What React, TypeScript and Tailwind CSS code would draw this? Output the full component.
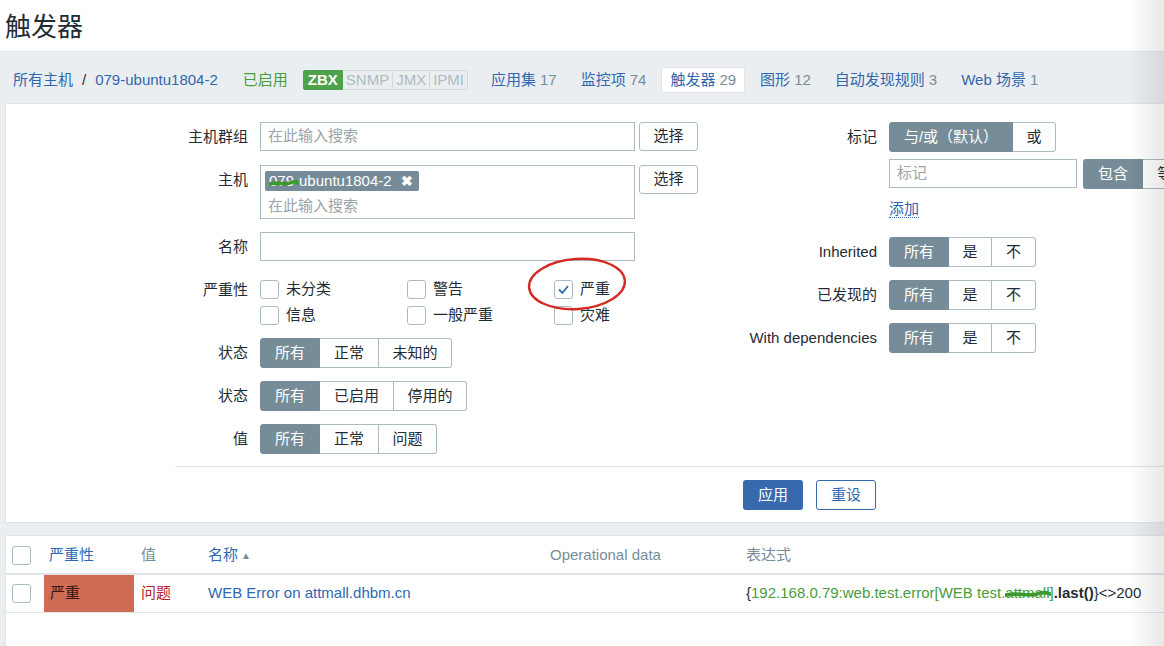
import React from "react";

const LINK = "text-[#2f68ae]";

interface SegItem {
  label: string;
  w: string;
}

function Seg({ items }: { items: SegItem[] }) {
  return (
    <div className="flex h-[30px]">
      {items.map((it, i) => (
        <div
          key={it.label}
          className={`${it.w} flex items-center justify-center ${
            i === 0
              ? "bg-[#768d99] text-white rounded-l-[3px] border border-[#768d99]"
              : "bg-white text-[#1f2c33] border-y border-r border-[#acbbc2]"
          } ${i === items.length - 1 ? "rounded-r-[3px]" : ""}`}
        >
          {it.label}
        </div>
      ))}
    </div>
  );
}

function Checkbox({ checked = false }: { checked?: boolean }) {
  return (
    <span className="w-[19px] h-[19px] border border-[#acbbc2] rounded-[3px] bg-white flex items-center justify-center shrink-0">
      {checked && (
        <svg width="13" height="13" viewBox="0 0 13 13">
          <polyline points="2,6.5 5.5,10 11,3" fill="none" stroke="#2f68ae" strokeWidth="1.8" />
        </svg>
      )}
    </span>
  );
}

function Scribble({ w }: { w: number }) {
  return (
    <svg className="absolute left-0 top-[4px] pointer-events-none" width={w} height="12" viewBox={`0 0 ${w} 12`}>
      <path
        d={`M1 7 C ${w * 0.3} 4, ${w * 0.5} 9, ${w * 0.7} 6 S ${w - 4} 5, ${w - 1} 6`}
        fill="none"
        stroke="#3c9a2c"
        strokeWidth="3.6"
        strokeLinecap="round"
      />
    </svg>
  );
}

function Row({ label, children, labelW }: { label: string; children: React.ReactNode; labelW: string }) {
  return (
    <div className="flex">
      <div className={`${labelW} shrink-0 text-right pr-[12px] h-[30px] flex items-center justify-end`}>{label}</div>
      {children}
    </div>
  );
}

export default function App() {
  const tabs = [
    { name: "应用集", n: "17", active: false },
    { name: "监控项", n: "74", active: false },
    { name: "触发器", n: "29", active: true },
    { name: "图形", n: "12", active: false },
    { name: "自动发现规则", n: "3", active: false },
    { name: "Web 场景", n: "1", active: false },
  ];

  return (
    <div className="relative w-[1164px] h-[646px] overflow-hidden bg-[#ebeef0] text-[15px] text-[#1f2c33] font-['Liberation_Sans','Noto_Sans_CJK_SC',sans-serif]">
      {/* header */}
      <div className="h-[52px] bg-white border-b border-[#dfe4e7] flex items-center px-[5px]">
        <h1 className="text-[26px] leading-none pt-[2px]">触发器</h1>
      </div>

      {/* breadcrumbs + tabs */}
      <div className="h-[51px] pt-[5px] flex items-center pl-[13px]">
        <span className={LINK}>所有主机</span>
        <span className="mx-[9px]">/</span>
        <span className={LINK}>079-ubuntu1804-2</span>
        <span className="ml-[25px] text-[#4a9c3d]">已启用</span>
        <div className="ml-[15px] flex h-[20px] text-[15px] leading-[18px]">
          <span className="px-[4px] bg-[#4ea24c] text-white border border-[#4ea24c] rounded-l-[2px] font-bold">ZBX</span>
          <span className="px-[3px] bg-[#ebeef0] text-[#acbbc2] border-y border-r border-[#d2d9dd]">SNMP</span>
          <span className="px-[3px] bg-[#ebeef0] text-[#acbbc2] border-y border-r border-[#d2d9dd]">JMX</span>
          <span className="px-[3px] bg-[#ebeef0] text-[#acbbc2] border-y border-r border-[#d2d9dd] rounded-r-[2px]">IPMI</span>
        </div>
        <div className="ml-[14px] flex gap-[6px]">
          {tabs.map((t) => (
            <div
              key={t.name}
              className={`h-[26px] px-[8px] flex items-center border rounded-[2px] ${
                t.active ? "bg-white border-[#dfe4e7]" : "border-transparent"
              }`}
            >
              <span className={LINK}>{t.name}</span>
              <span className="ml-[4px] text-[#768d99]">{t.n}</span>
            </div>
          ))}
        </div>
      </div>

      {/* filter */}
      <div className="ml-[5px] w-[1240px] bg-white border border-[#dfe4e7] pt-[18px]">
        <div className="flex">
          {/* left column */}
          <div className="w-[705px] shrink-0 flex flex-col gap-[13px]">
            <Row label="主机群组" labelW="w-[254px]">
              <div className="flex gap-[4px]">
                <div className="w-[375px] h-[29px] border border-[#acbbc2] flex items-center px-[7px] text-[#9aa4a9]">
                  在此输入搜索
                </div>
                <div className="w-[59px] h-[29px] border border-[#acbbc2] rounded-[3px] flex items-center justify-center">选择</div>
              </div>
            </Row>
            <div className="flex">
              <div className="w-[254px] shrink-0 text-right pr-[12px] h-[30px] flex items-center justify-end">主机</div>
              <div className="flex gap-[4px]">
                <div className="w-[375px] h-[54px] border border-[#acbbc2] px-[4px] pt-[4px]">
                  <span className="inline-flex items-center h-[20px] px-[4px] bg-[#768d99] text-white rounded-[2px] leading-none">
                    <span className="relative">
                      079
                      <Scribble w={30} />
                    </span>
                    -ubuntu1804-2
                    <span className="ml-[9px] mr-[2px] text-[14px] font-bold">✖</span>
                  </span>
                  <div className="px-[3px] pt-[3px] text-[#9aa4a9] leading-[20px]">在此输入搜索</div>
                </div>
                <div className="w-[59px] h-[29px] border border-[#acbbc2] rounded-[3px] flex items-center justify-center">选择</div>
              </div>
            </div>
            <Row label="名称" labelW="w-[254px]">
              <div className="w-[375px] h-[29px] border border-[#acbbc2]" />
            </Row>
            <div className="flex h-[50px]">
              <div className="w-[254px] shrink-0 text-right pr-[12px] pt-[4px] leading-[22px]">严重性</div>
              <div className="pt-[5px] grid grid-cols-[147px_147px_147px] gap-y-[6px]">
                {[
                  ["未分类", false],
                  ["警告", false],
                  ["严重", true],
                  ["信息", false],
                  ["一般严重", false],
                  ["灾难", false],
                ].map(([l, c]) => (
                  <div key={l as string} className="flex items-center gap-[7px] h-[19px]">
                    <Checkbox checked={c as boolean} />
                    <span>{l as string}</span>
                  </div>
                ))}
              </div>
            </div>
            <Row label="状态" labelW="w-[254px]">
              <Seg
                items={[
                  { label: "所有", w: "w-[60px]" },
                  { label: "正常", w: "w-[59px]" },
                  { label: "未知的", w: "w-[73px]" },
                ]}
              />
            </Row>
            <Row label="状态" labelW="w-[254px]">
              <Seg
                items={[
                  { label: "所有", w: "w-[60px]" },
                  { label: "已启用", w: "w-[74px]" },
                  { label: "停用的", w: "w-[73px]" },
                ]}
              />
            </Row>
            <Row label="值" labelW="w-[254px]">
              <Seg
                items={[
                  { label: "所有", w: "w-[60px]" },
                  { label: "正常", w: "w-[59px]" },
                  { label: "问题", w: "w-[58px]" },
                ]}
              />
            </Row>
          </div>

          {/* right column */}
          <div className="flex flex-col">
            <Row label="标记" labelW="w-[178px]">
              <div className="flex flex-col">
                <Seg
                  items={[
                    { label: "与/或（默认）", w: "w-[124px]" },
                    { label: "或", w: "w-[43px]" },
                  ]}
                />
                <div className="mt-[7px] flex gap-[6px]">
                  <div className="w-[188px] h-[29px] border border-[#acbbc2] flex items-center px-[7px] text-[#9aa4a9]">标记</div>
                  <div className="flex h-[30px]">
                    <div className="w-[60px] bg-[#768d99] text-white rounded-l-[3px] flex items-center justify-center">包含</div>
                    <div className="w-[60px] border-y border-r border-[#acbbc2] flex items-center justify-center">等于</div>
                  </div>
                </div>
                <div className="mt-[9px] h-[20px]">
                  <span className={`${LINK} border-b border-dotted border-[#2f68ae]`}>添加</span>
                </div>
              </div>
            </Row>
            <div className="mt-[19px] flex flex-col gap-[13px]">
              {["Inherited", "已发现的", "With dependencies"].map((l) => (
                <Row key={l} label={l} labelW="w-[178px]">
                  <Seg
                    items={[
                      { label: "所有", w: "w-[60px]" },
                      { label: "是", w: "w-[43px]" },
                      { label: "不", w: "w-[44px]" },
                    ]}
                  />
                </Row>
              ))}
            </div>
          </div>
        </div>

        {/* actions */}
        <div className="mt-[12px] ml-[169px] border-t border-[#dfe4e7] pt-[13px] pb-[12px] pl-[568px] flex gap-[13px]">
          <div className="w-[60px] h-[30px] bg-[#3669ad] text-white rounded-[3px] flex items-center justify-center">应用</div>
          <div className="w-[60px] h-[30px] border border-[#3669ad] text-[#3669ad] rounded-[3px] flex items-center justify-center">重设</div>
        </div>
      </div>

      {/* table */}
      <div className="ml-[5px] mt-[12px] w-[1240px] h-[200px] bg-white border border-[#dfe4e7]">
        <div className="flex h-[39px] pt-[2px] items-center border-b-2 border-[#dfe4e7]">
          <div className="w-[38px] pl-[6px]">
            <Checkbox />
          </div>
          <div className={`w-[90px] pl-[5px] ${LINK}`}>严重性</div>
          <div className="w-[67px] pl-[7px] text-[#768d99]">值</div>
          <div className={`w-[342px] pl-[7px] ${LINK} flex items-center`}>
            名称<span className="ml-[3px] text-[10px] text-[#768d99]">▲</span>
          </div>
          <div className="w-[196px] pl-[7px] text-[#768d99]">Operational data</div>
          <div className="pl-[7px] text-[#768d99]">表达式</div>
        </div>
        <div className="flex h-[38px] items-center border-b border-[#dfe4e7]">
          <div className="w-[38px] pl-[6px]">
            <Checkbox />
          </div>
          <div className="w-[90px] h-full pl-[6px] bg-[#d06c54] text-[#3a160d] flex items-center">严重</div>
          <div className="w-[67px] pl-[7px] text-[#b3241f]">问题</div>
          <div className={`w-[342px] pl-[7px] ${LINK}`}>WEB Error on attmall.dhbm.cn</div>
          <div className="w-[196px]" />
          <div className="pl-[7px] whitespace-nowrap">
            {"{"}
            <span className="text-[#4a9c3d]">
              192.168.0.79:web.test.error[WEB test.
              <span className="relative">
                attmall
                <Scribble w={46} />
              </span>
              ]
            </span>
            <span className="font-bold">.last()</span>
            {"}<>200"}
          </div>
        </div>
      </div>

      {/* red annotation ellipse */}
      <svg className="absolute left-[525px] top-[255px] pointer-events-none" width="104" height="58" viewBox="0 0 104 58">
        <ellipse cx="52" cy="29" rx="48" ry="25" fill="none" stroke="#d42a22" strokeWidth="2.4" transform="rotate(-4 52 29)" />
      </svg>

      {/* right edge shading */}
      <div className="absolute top-0 right-0 h-full w-[36px] bg-gradient-to-r from-transparent to-[rgba(0,0,0,0.09)] pointer-events-none" />
    </div>
  );
}
